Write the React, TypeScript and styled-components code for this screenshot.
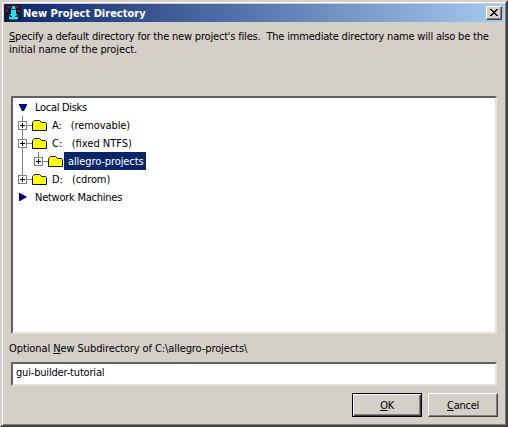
import React from "react";
import styled, { createGlobalStyle, css } from "styled-components";

const GlobalStyle = createGlobalStyle`
  body { margin: 0; background: #d4d0c8; overflow: hidden; }
  * { box-sizing: border-box; }
`;

const Dialog = styled.main`
  width: 508px;
  height: 427px;
  display: flex;
  flex-direction: column;
  padding: 2px;
  background: #d4d0c8;
  border: 2px solid;
  border-color: #d4d0c8 #404040 #404040 #d4d0c8;
  box-shadow: inset 1px 1px #fff, inset -1px -1px #808080;
  font: 11px/13px "DejaVu Sans Condensed", "DejaVu Sans", sans-serif;
  font-stretch: condensed;
  color: #000;
`;

const TitleBar = styled.header`
  flex: none;
  height: 18px;
  display: flex;
  align-items: center;
  padding: 0 2px 0 1px;
  background: linear-gradient(90deg, #0a246a, #a6caf0);
`;

const Title = styled.h1`
  flex: 1;
  margin: 0 0 0 2px;
  padding-top: 1px;
  font-size: 11px;
  line-height: 17px;
  font-weight: bold;
  color: #fff;
  white-space: nowrap;
`;

const raised = css`
  border: 1px solid;
  border-color: #fff #404040 #404040 #fff;
  box-shadow: inset -1px -1px #808080;
`;

const CloseButton = styled.button`
  ${raised}
  width: 16px;
  height: 14px;
  padding: 0 1px 1px 0;
  display: grid;
  place-items: center;
  background: #d4d0c8;
`;

const Text = styled.span<{ $spacing?: number }>`
  white-space: pre;
  letter-spacing: ${(p) => p.$spacing ?? 0}px;
`;

const Intro = styled.p`
  display: flex;
  flex-direction: column;
  margin: 8px 0 0 5px;
  height: 66px;
`;

const sunken = css`
  border: 2px solid;
  border-color: #606060 #e4e1da #e4e1da #606060;
  background: #fff;
  margin-left: 7px;
  width: 486px;
`;

const Tree = styled.section`
  ${sunken}
  flex: none;
  height: 238px;
`;

const Row = styled.div`
  height: 18px;
  display: flex;
  align-items: center;
`;

const Gutter = styled.svg`
  flex: none;
  display: block;
`;

const RowLabel = styled.span<{ $selected?: boolean; $spacing?: number }>`
  height: 18px;
  line-height: 18px;
  padding: 1px 3px 0 4px;
  white-space: pre;
  letter-spacing: ${(p) => p.$spacing ?? 0}px;
  ${(p) => p.$selected && css`
    background: #0a246a;
    color: #fff;
  `}
`;

const FieldLabel = styled.label`
  height: 13px;
  margin: 8px 0 0 5px;
`;

const Field = styled.div`
  ${sunken}
  flex: none;
  height: 24px;
  margin-top: 7px;
  padding: 0 3px;
  line-height: 18px;
`;

const Actions = styled.footer`
  display: flex;
  justify-content: flex-end;
  gap: 6px;
  margin: 7px 6px 0 0;
`;

const Button = styled.button<{ $primary?: boolean }>`
  ${raised}
  width: 70px;
  height: 24px;
  padding: 0;
  background: #d4d0c8;
  font: inherit;
  color: #000;
  ${(p) => p.$primary && css`
    border-color: #000;
    box-shadow: inset 1px 1px #fff, inset -1px -1px #404040, inset -2px -2px #808080;
  `}
`;

const AppIcon = () => (
  <Gutter width="16" height="16" viewBox="0 0 16 16" shapeRendering="crispEdges">
    <path d="M0 0h16v16H0z" fill="#101a30" />
    <path d="M2 1h4v2H2zM10 1h4v2h-4zM1 4h2v3H1zM12 5h3v2h-3z" fill="#7c1430" />
    <path d="M7 1h3v3H7zM6 5h5v4H6zM5 9h7v1H5zM6 10h5v1H6zM7 11h3v1H7zM4 12h9v2H4z" fill="#20e0ee" />
    <path d="M6 3h1v2H6zM10 3h1v2h-1zM4 10h1v2H4zM12 10h1v2h-1zM5 14h7v1H5z" fill="#087f99" />
  </Gutter>
);

const CloseIcon = () => (
  <svg width="8" height="7" viewBox="0 0 8 7" shapeRendering="crispEdges">
    <path d="M0 0h2v1H0zM6 0h2v1H6zM1 1h2v1H1zM5 1h2v1H5zM2 2h4v1H2zM3 3h2v1H3zM2 4h4v1H2zM1 5h2v1H1zM5 5h2v1H5zM0 6h2v1H0zM6 6h2v1H6z" />
  </svg>
);

type NodeKind = "open" | "closed" | "disk" | "folder";
type TreeItem = { kind: NodeKind; label: string; last?: boolean; spacing: number };

const items: TreeItem[] = [
  { kind: "open", label: "Local Disks", spacing: -0.3 },
  { kind: "disk", label: "A:   (removable)", spacing: -0.1 },
  { kind: "disk", label: "C:   (fixed NTFS)", spacing: 0 },
  { kind: "folder", label: "allegro-projects", spacing: -0.1 },
  { kind: "disk", label: "D:   (cdrom)", last: true, spacing: -0.1 },
  { kind: "closed", label: "Network Machines", spacing: -0.25 },
];

const NodeGutter = ({ kind, last }: { kind: NodeKind; last?: boolean }) => {
  if (kind === "open" || kind === "closed") {
    return (
      <Gutter width="18" height="18">
        <path d={kind === "open" ? "M6 6h8v1l-3 6h-2L6 7z" : "M6 5h1l7 4-7 4H6z"} fill="#000084" />
      </Gutter>
    );
  }
  const x = kind === "folder" ? 16 : 0;
  return (
    <Gutter width={35 + x} height="18">
      <g shapeRendering="crispEdges">
        <path d={last ? "M9 0h1v9H9z" : "M9 0h1v18H9z"} fill="#808080" />
        <path d={`M${9 + x} 0h1v5h-1zM${14 + x} 9h5v1h-5z`} fill="#808080" />
        <rect x={5.5 + x} y="5.5" width="8" height="8" fill="#fff" stroke="#808080" />
        <path d={`M${7 + x} 9h5v1h-5zM${9 + x} 7h1v5h-1z`} />
      </g>
      <path
        transform={`translate(${x} 0)`}
        d="M19.5 14.5V6.5l2-2h5l2 2h4l1 1v7z"
        fill="#ff0"
        stroke="#111"
      />
    </Gutter>
  );
};

export default function App() {
  return (
    <>
      <GlobalStyle />
      <Dialog>
        <TitleBar>
          <AppIcon />
          <Title><Text>New Project Directory</Text></Title>
          <CloseButton aria-label="Close"><CloseIcon /></CloseButton>
        </TitleBar>
        <Intro>
          <Text $spacing={-0.19}><u>S</u>pecify a default directory for the new project's files.  The immediate directory name will also be the</Text>
          <Text $spacing={-0.11}>initial name of the project.</Text>
        </Intro>
        <Tree>
          {items.map((item) => (
            <Row key={item.label}>
              <NodeGutter kind={item.kind} last={item.last} />
              <RowLabel $selected={item.kind === "folder"} $spacing={item.spacing}>{item.label}</RowLabel>
            </Row>
          ))}
        </Tree>
        <FieldLabel><Text $spacing={-0.09}>Optional <u>N</u>ew Subdirectory of C:\allegro-projects\</Text></FieldLabel>
        <Field><Text $spacing={-0.18}>gui-builder-tutorial</Text></Field>
        <Actions>
          <Button $primary><Text $spacing={-0.4}><u>O</u>K</Text></Button>
          <Button><Text $spacing={-0.25}><u>C</u>ancel</Text></Button>
        </Actions>
      </Dialog>
    </>
  );
}
